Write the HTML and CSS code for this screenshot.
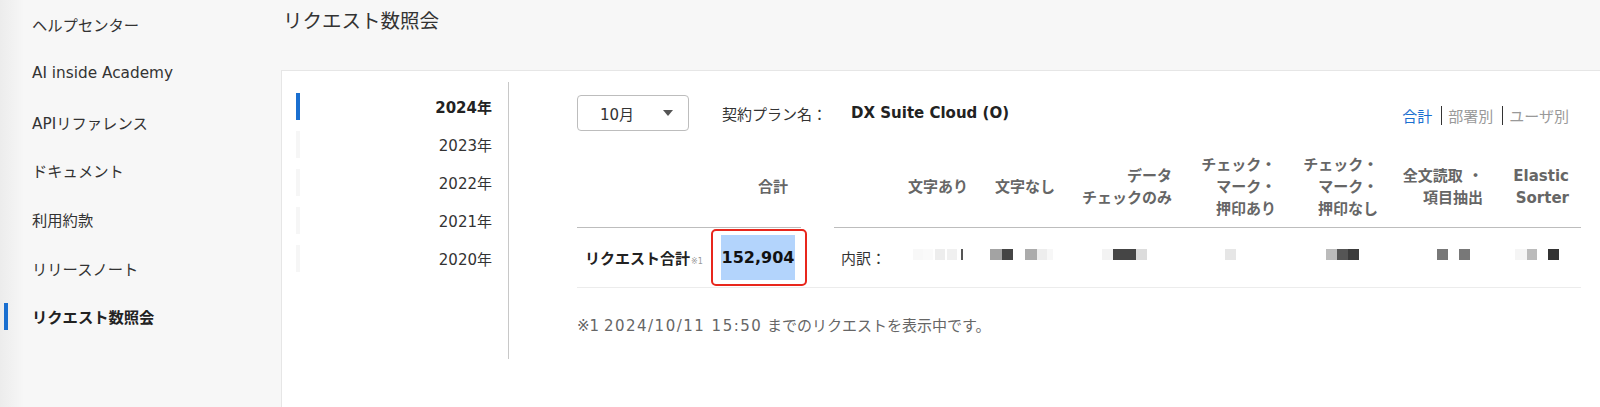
FILE: index.html
```html
<!DOCTYPE html>
<html lang="ja">
<head>
<meta charset="utf-8">
<title>リクエスト数照会</title>
<link rel="stylesheet" href="styles.css">
</head>
<body>
<div class="app">
  <nav class="sidebar">
    <a class="nav-item">ヘルプセンター</a>
    <a class="nav-item">AI inside Academy</a>
    <a class="nav-item">APIリファレンス</a>
    <a class="nav-item">ドキュメント</a>
    <a class="nav-item">利用約款</a>
    <a class="nav-item">リリースノート</a>
    <a class="nav-item active">リクエスト数照会</a>
  </nav>
  <main class="main">
    <h1 class="page-title">リクエスト数照会</h1>
    <section class="card">
      <ul class="years">
        <li class="year active">2024年</li>
        <li class="year">2023年</li>
        <li class="year">2022年</li>
        <li class="year">2021年</li>
        <li class="year">2020年</li>
      </ul>
      <div class="vsep"></div>
      <div class="panel">
        <div class="toolbar">
          <div class="select"><span>10月</span><i class="caret"></i></div>
          <span class="plan-label">契約プラン名：</span>
          <span class="plan-name">DX Suite Cloud (O)</span>
          <div class="tabs">
            <span class="tab on">合計</span>
            <span class="tab-sep"></span>
            <span class="tab">部署別</span>
            <span class="tab-sep"></span>
            <span class="tab">ユーザ別</span>
          </div>
        </div>
        <table class="usage">
          <colgroup>
            <col class="w-label"><col class="w-total"><col class="w-spacer"><col class="w-breakdown">
            <col class="w-c5"><col class="w-c6"><col class="w-c7"><col class="w-c8"><col class="w-c9"><col class="w-c10"><col class="w-c11">
          </colgroup>
          <thead>
            <tr>
              <th></th>
              <th class="th-total">合計</th>
              <th class="spacer"></th>
              <th></th>
              <th>文字あり</th>
              <th>文字なし</th>
              <th>データ<br>チェックのみ</th>
              <th>チェック・<br>マーク・<br>押印あり</th>
              <th>チェック・<br>マーク・<br>押印なし</th>
              <th>全文読取 ・<br>項目抽出</th>
              <th>Elastic<br>Sorter</th>
            </tr>
          </thead>
          <tbody>
            <tr>
              <td class="label">リクエスト合計<span class="ref">※1</span></td>
              <td class="total"><span class="annot"><span class="sel">152,904</span></span></td>
              <td></td>
              <td class="breakdown">内訳：</td>
              <td class="mz mz-a"><span class="b w10 k98"></span><span class="b w10 k99"></span><span class="g w2"></span><span class="b w10 k93"></span><span class="g w2"></span><span class="b w10 k94"></span><span class="g w4"></span><span class="b w2 k33"></span><span class="g w2"></span></td>
              <td class="mz mz-b"><span class="b w12 k64"></span><span class="b w11 k27"></span><span class="g w12"></span><span class="b w12 k67"></span><span class="b w10 k93"></span><span class="b w6 k97"></span></td>
              <td class="mz mz-c"><span class="b w11 k95"></span><span class="b w23 k27"></span><span class="b w11 k86"></span></td>
              <td class="mz mz-d"><span class="b w11 k90"></span></td>
              <td class="mz mz-e"><span class="b w11 k73"></span><span class="b w11 k33"></span><span class="b w11 k23"></span></td>
              <td class="mz mz-f"><span class="b w11 k47"></span><span class="g w11"></span><span class="b w11 k47"></span></td>
              <td class="mz mz-g"><span class="b w12 k96"></span><span class="b w10 k73"></span><span class="g w11"></span><span class="b w11 k20"></span></td>
            </tr>
          </tbody>
        </table>
        <p class="note">※1 <span class="stamp">2024/10/11 15:50</span> までのリクエストを表示中です。</p>
      </div>
    </section>
  </main>
</div>
</body>
</html>
```

FILE: styles.css
```css
* { box-sizing: border-box; }

html, body {
  overflow: hidden;
}

body {
  margin: 0;
  background: #f7f7f7;
  color: #333;
  font-family: "DejaVu Sans", "Noto Sans CJK JP", sans-serif;
}

.app {
  display: flex;
  height: 407px;
  overflow: hidden;
}

/* sidebar */
.sidebar {
  width: 281px;
  flex: none;
  background: linear-gradient(to right, #ececec 0, #f4f4f4 18px, #f7f7f7 24px);
}

.nav-item {
  display: flex;
  align-items: center;
  height: 48.7px;
  font-size: 15.3px;
  color: #333;
}

.nav-item::before {
  content: "";
  width: 4px;
  height: 27px;
  margin: 0 24px 0 4px;
}

.nav-item.active {
  font-weight: bold;
  color: #222;
}

.nav-item.active::before {
  background: #1a6fd0;
}

/* main */
.main {
  flex: 1;
  min-width: 0;
  display: flex;
  flex-direction: column;
}

.page-title {
  margin: 0;
  height: 70px;
  flex: none;
  padding-left: 2px;
  font-size: 19.5px;
  font-weight: normal;
  line-height: 44px;
  color: #333;
}

.card {
  flex: 1;
  display: flex;
  align-items: flex-start;
  background: #fff;
  border-top: 1px solid #e6e6e6;
  border-left: 1px solid #e6e6e6;
}

.years {
  list-style: none;
  margin: 0;
  padding: 22px 16px 0 14px;
  width: 226px;
  flex: none;
}

.year {
  display: flex;
  align-items: center;
  height: 27px;
  margin-bottom: 11px;
  font-size: 15px;
  color: #333;
}

.year::before {
  content: "";
  width: 4px;
  height: 27px;
  background: #f6f6f6;
  margin-right: auto;
}

.year.active {
  font-weight: bold;
  color: #222;
}

.year.active::before {
  background: #1a6fd0;
}

.vsep {
  flex: none;
  width: 1px;
  height: 277px;
  margin-top: 11px;
  background: #c8c8c8;
}

.panel {
  flex: 1;
  min-width: 0;
  padding: 24px 19px 0 68px;
}

/* toolbar */
.toolbar {
  display: flex;
  align-items: center;
  height: 36px;
}

.select {
  width: 112px;
  height: 36px;
  border: 1px solid #bdbdbd;
  border-radius: 4px;
  display: flex;
  align-items: center;
  padding: 0 15px 0 22px;
  font-size: 15px;
  color: #333;
}

.caret {
  margin-left: auto;
  width: 0;
  height: 0;
  border-top: 6px solid #555;
  border-left: 5.5px solid transparent;
  border-right: 5.5px solid transparent;
}

.plan-label {
  margin-left: 33px;
  font-size: 15px;
  color: #333;
}

.plan-name {
  margin-left: 24px;
  font-size: 15px;
  font-weight: bold;
  color: #222;
}

.tabs {
  margin-left: auto;
  margin-right: 12px;
  padding-top: 4px;
  display: flex;
  align-items: center;
  font-size: 15px;
  color: #999;
}

.tab.on {
  color: #1a6fd0;
}

.tab-sep {
  width: 1px;
  height: 19px;
  background: #333;
  margin: 0 6px 0 9px;
}

/* table */
.usage {
  margin-top: 16px;
  width: 100%;
  border-collapse: collapse;
  table-layout: fixed;
}

.w-label { width: 128px; }
.w-total { width: 96px; }
.w-spacer { width: 33px; }
.w-breakdown { width: 61px; }
.w-c5 { width: 85px; }
.w-c6 { width: 87px; }
.w-c7 { width: 117px; }
.w-c8 { width: 104px; }
.w-c9 { width: 102px; }
.w-c10 { width: 105px; }
.w-c11 { width: 86px; }

.usage th {
  font-size: 15px;
  font-weight: bold;
  color: #666;
  line-height: 22px;
  padding: 7px 12px 7px 0;
  text-align: right;
  vertical-align: middle;
  border-bottom: 1px solid #bdbdbd;
  white-space: nowrap;
}

.usage th.spacer {
  border-bottom: none;
}

.usage th.th-total {
  padding-right: 13px;
}

.usage td {
  height: 60px;
  padding: 0;
  border-bottom: 1px solid #ececec;
  vertical-align: middle;
  white-space: nowrap;
}

.usage td.label {
  padding-left: 8px;
  font-size: 15px;
  font-weight: bold;
  color: #222;
}

.ref {
  font-size: 8px;
  font-weight: normal;
  color: #999;
  margin-left: 1px;
}

.usage td.total {
  padding-left: 6px;
}

.annot {
  display: inline-block;
  border: 2px solid #e8261c;
  border-radius: 5px;
  padding: 4px 10px 4px 8px;
}

.sel {
  display: block;
  width: 74px;
  height: 45px;
  line-height: 45px;
  text-align: center;
  background: #b3d4fc;
  font-size: 16px;
  font-weight: bold;
  color: #111;
}

.usage td.breakdown {
  padding-left: 7px;
  font-size: 15px;
  color: #333;
}

/* mosaic (pixelated values) */
.usage td.mz {
  text-align: right;
  font-size: 0;
  padding-top: 0;
  padding-bottom: 6px;
}

.mz-a { padding-right: 15px !important; }
.mz-b { padding-right: 14px !important; }
.mz-c { padding-right: 37px !important; }
.mz-d { padding-right: 52px !important; }
.mz-e { padding-right: 31px !important; }
.mz-f { padding-right: 25px !important; }
.mz-g { padding-right: 22px !important; }

.b, .g {
  display: inline-block;
  height: 11px;
  vertical-align: middle;
}

.w2 { width: 2px; }
.w4 { width: 4px; }
.w6 { width: 6px; }
.w10 { width: 10px; }
.w11 { width: 11px; }
.w12 { width: 12px; }
.w23 { width: 23px; }

.k20 { background: #333; }
.k23 { background: #3b3b3b; }
.k27 { background: #454545; }
.k33 { background: #555; }
.k47 { background: #787878; }
.k64 { background: #a3a3a3; }
.k67 { background: #ababab; }
.k73 { background: #bbb; }
.k86 { background: #dcdcdc; }
.k90 { background: #e6e6e6; }
.k93 { background: #ededed; }
.k94 { background: #f0f0f0; }
.k95 { background: #f3f3f3; }
.k96 { background: #f5f5f5; }
.k97 { background: #f7f7f7; }
.k98 { background: #f8f8f8; }
.k99 { background: #fafafa; }

.note {
  margin: 28px 0 0;
  font-size: 15px;
  line-height: 20px;
  color: #666;
}

.stamp {
  letter-spacing: 1.5px;
}
```
